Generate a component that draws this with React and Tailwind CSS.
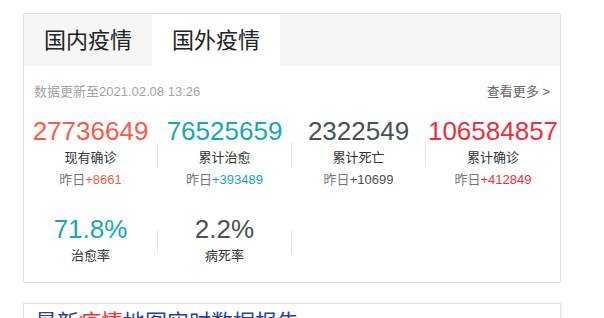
import React from 'react';

const font = { fontFamily: '"Liberation Sans", "Noto Sans CJK SC", sans-serif' };

const stats = [
    { value: '27736649', label: '现有确诊', add: '+8661', color: 'text-[#f95b4b]' },
    { value: '76525659', label: '累计治愈', add: '+393489', color: 'text-[#19a7b4]' },
    { value: '2322549', label: '累计死亡', add: '+10699', color: 'text-[#4b4f56]' },
    { value: '106584857', label: '累计确诊', add: '+412849', color: 'text-[#e9303c]' },
    { value: '71.8%', label: '治愈率', color: 'text-[#19a7b4]' },
    { value: '2.2%', label: '病死率', color: 'text-[#4b4f56]' },
];

function StatCell({ item, index }) {
    const last = index % 4 === 3;
    return (
        <div className="flex items-center">
            <div className="flex-1 flex flex-col items-center">
                <div className={`text-[26px] leading-[22px] h-[22px] ${item.color}`}>{item.value}</div>
                <div className="mt-[8px] text-[13px] leading-[16px] text-[#333]">{item.label}</div>
                {item.add && (
                    <div className="mt-[4px] text-[13px] leading-[20px] text-[#777]">
                        昨日<span className={item.color}>{item.add}</span>
                    </div>
                )}
            </div>
            {!last && <div className="w-px h-[24px] bg-[#e3e3e3]" />}
        </div>
    );
}

export default function App() {
    return (
        <div className="bg-white w-[604px] h-[318px] overflow-hidden pt-[13px] pl-[23px]" style={font}>
            <div className="w-[538px] border border-[#e2e2e2]">
                <div className="flex h-[52px] bg-[#f6f6f6]">
                    <div className="w-[128px] flex items-center justify-center text-[22px] text-[#222]">国内疫情</div>
                    <div className="w-[128px] flex items-center justify-center text-[22px] text-[#222] bg-white">国外疫情</div>
                </div>
                <div className="pt-[16px] pb-[18px]">
                    <div className="flex justify-between px-[10px] text-[13px] leading-[20px]">
                        <span className="text-[#a3a3a3]">数据更新至2021.02.08 13:26</span>
                        <span className="text-[#666]">查看更多 &gt;</span>
                    </div>
                    <div className="mt-[18px] grid grid-cols-4 gap-y-[28px]">
                        {stats.map((item, i) => (
                            <StatCell key={item.label} item={item} index={i} />
                        ))}
                    </div>
                </div>
            </div>
            <div className="mt-[20px] w-[538px] h-[60px] border border-[#e2e2e2] shadow-[2px_0_2px_rgba(0,0,0,0.06)] pt-[4px] px-[11px]">
                <div className="text-[22px] leading-[30px] text-[#2a3fa5]">
                    最新<span className="text-[#ff2a2a]">疫情</span>地图实时数据报告
                </div>
            </div>
        </div>
    );
}
